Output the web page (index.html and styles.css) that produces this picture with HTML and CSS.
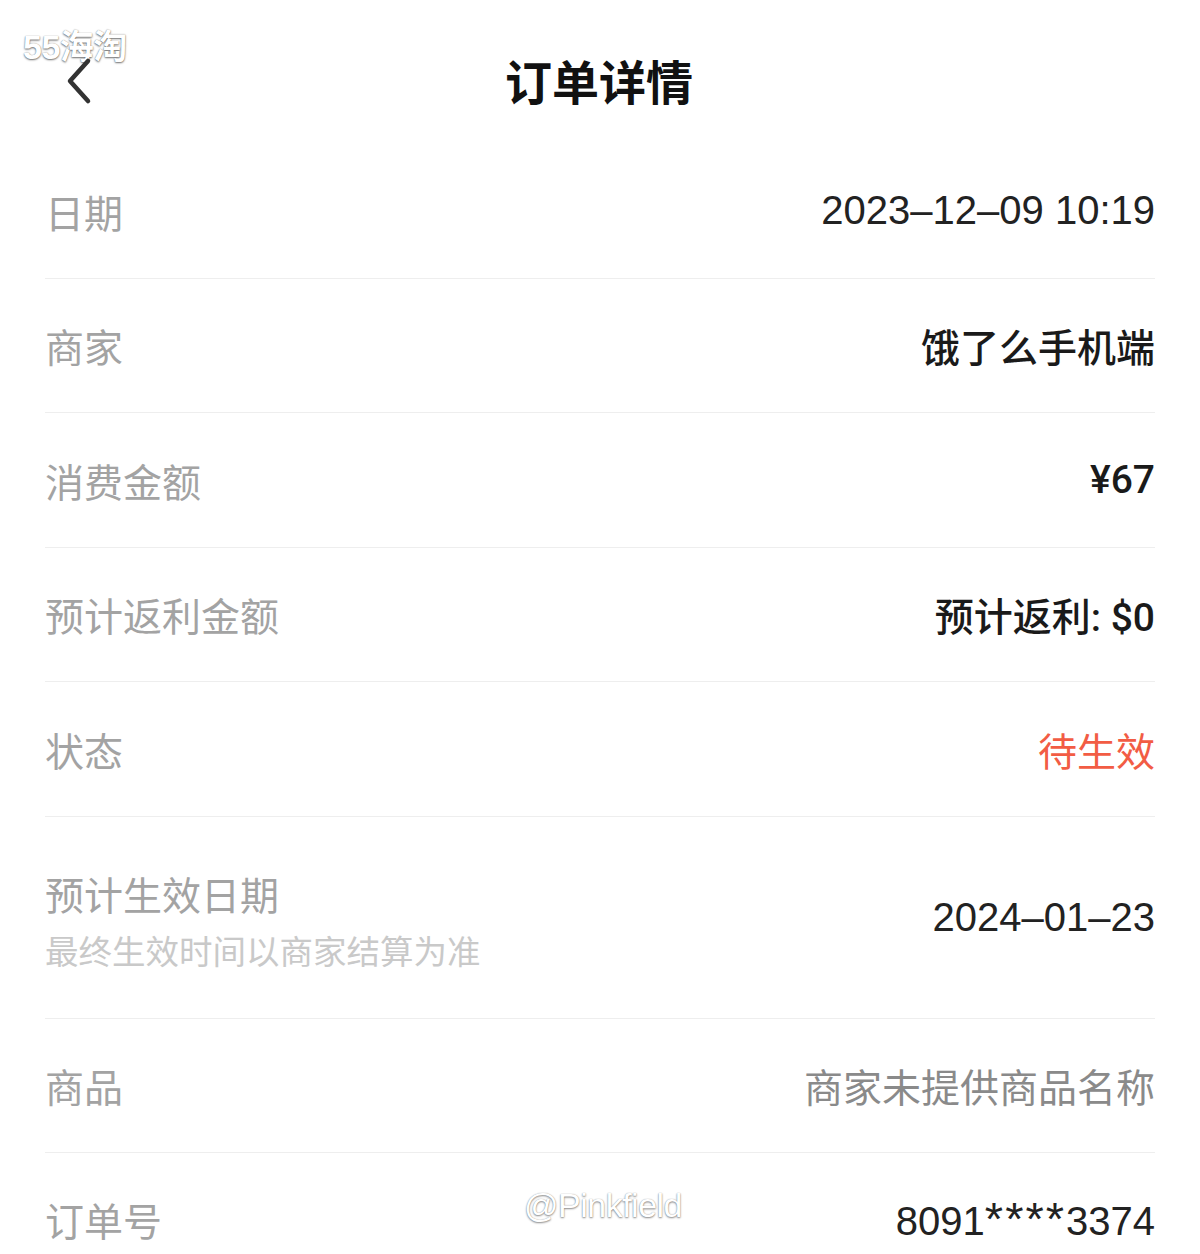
FILE: index.html
```html
<!DOCTYPE html>
<html lang="zh-CN">
<head>
  <meta charset="UTF-8">
  <title>订单详情</title>
  <link rel="stylesheet" href="styles.css">
</head>
<body>
  <div class="pantalla">
    <div class="marca">55海淘</div>

    <div class="cabecera">
      <svg class="atras" width="30" height="48" viewBox="0 0 30 48">
        <path d="M24 4 L6 24 L24 44" fill="none" stroke="#333" stroke-width="4.5" stroke-linecap="round" stroke-linejoin="round"/>
      </svg>
      <h1>订单详情</h1>
    </div>

    <div class="lista">
      <div class="fila">
        <span class="etiqueta">日期</span>
        <span class="valor">2023–12–09 10:19</span>
      </div>
      <div class="fila">
        <span class="etiqueta">商家</span>
        <span class="valor fuerte">饿了么手机端</span>
      </div>
      <div class="fila">
        <span class="etiqueta">消费金额</span>
        <span class="valor fuerte">¥67</span>
      </div>
      <div class="fila">
        <span class="etiqueta">预计返利金额</span>
        <span class="valor fuerte">预计返利: $0</span>
      </div>
      <div class="fila">
        <span class="etiqueta">状态</span>
        <span class="valor rojo">待生效</span>
      </div>
      <div class="fila alta">
        <div class="bloque">
          <span class="etiqueta">预计生效日期</span>
          <span class="nota">最终生效时间以商家结算为准</span>
        </div>
        <span class="valor">2024–01–23</span>
      </div>
      <div class="fila">
        <span class="etiqueta">商品</span>
        <span class="valor gris">商家未提供商品名称</span>
      </div>
      <div class="fila ultima">
        <span class="etiqueta">订单号</span>
        <span class="valor">8091<span class="oculto">****</span>3374</span>
      </div>
    </div>

    <div class="firma">@Pinkfield</div>
  </div>
</body>
</html>
```

FILE: styles.css
```css
body {
  margin: 0;
  background-color: #fff;
  font-family: "Liberation Sans", "Noto Sans CJK SC", sans-serif;
}

.pantalla {
  position: relative;
  width: 1200px;
  height: 1254px;
  overflow: hidden;
}

.marca {
  position: absolute;
  left: 23px;
  top: 20px;
  font-size: 34px;
  font-weight: bold;
  color: #fff;
  letter-spacing: -0.5px;
  text-shadow: 0 1px 2px rgba(0,0,0,0.55), 0 0 1px rgba(0,0,0,0.4);
}

.firma {
  position: absolute;
  left: 524px;
  top: 1186px;
  font-size: 34px;
  color: #fff;
  letter-spacing: -0.5px;
  text-shadow: 0 1px 2px rgba(0,0,0,0.45), 0 0 1px rgba(0,0,0,0.35);
}

.cabecera {
  height: 144px;
  display: flex;
  align-items: center;
  justify-content: center;
  position: relative;
}

.atras {
  position: absolute;
  left: 64px;
  top: 57px;
}

h1 {
  margin: 0 0 0 -2px;
  padding-top: 14px;
  font-size: 47px;
  font-weight: bold;
  color: #111;
}

.lista {
  padding: 0 45px;
}

.fila {
  height: 134.5px;
  box-sizing: border-box;
  display: flex;
  align-items: center;
  justify-content: space-between;
  border-bottom: 1.5px solid #eeeeee;
}

.fila.alta {
  height: 202px;
}

.fila.ultima {
  border-bottom: none;
  align-items: flex-start;
  padding-top: 38px;
}

.etiqueta {
  font-size: 39px;
  color: #a3a3a3;
}

.bloque {
  display: flex;
  flex-direction: column;
  gap: 4px;
  padding-top: 4px;
}

.nota {
  font-size: 33.5px;
  color: #c9c9c9;
}

.valor {
  font-size: 40px;
  color: #222;
}

.valor.fuerte {
  font-family: Roboto, "Noto Sans CJK SC", sans-serif;
  font-size: 39px;
  font-weight: 500;
  color: #1a1a1a;
}

.valor.rojo {
  font-size: 39px;
  color: #f25c44;
}

.valor.gris {
  font-size: 39px;
  color: #8a8a8a;
}

.oculto {
  font-size: 47px;
  letter-spacing: 2px;
}
```
